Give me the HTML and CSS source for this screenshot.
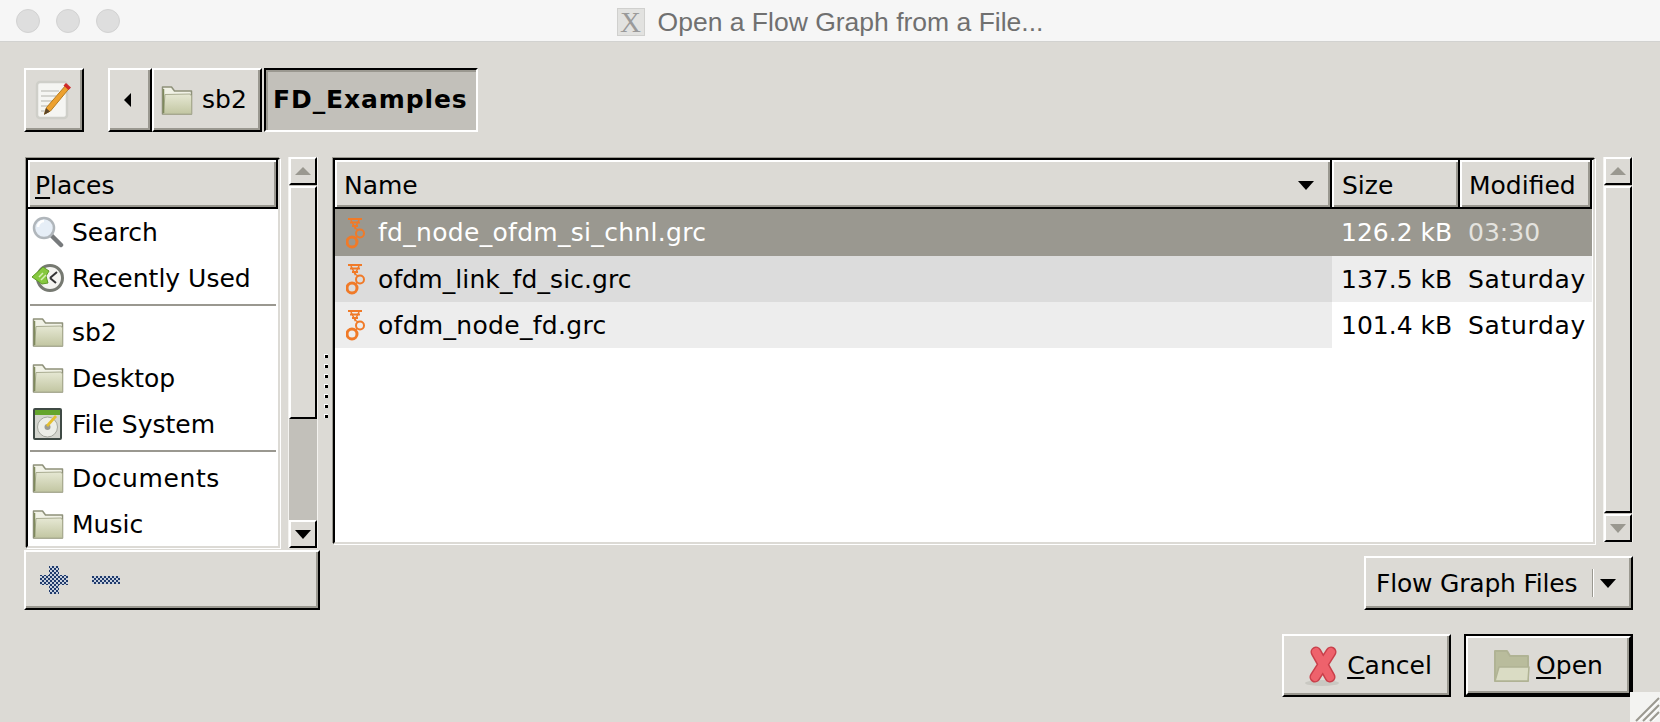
FILE: index.html
```html
<!DOCTYPE HTML>
<html lang="en">
  <head>
    <title>Open a Flow Graph from a File...</title>
    <meta charset="utf-8">
    <link rel="stylesheet" href="styles.css">
  </head>
  <body>

  <svg class="defs" width="0" height="0">
    <defs>
      <linearGradient id="folderFill" x1="0" y1="0" x2="0" y2="1">
        <stop offset="0" stop-color="#e6e8d4"/>
        <stop offset="1" stop-color="#c2c6a2"/>
      </linearGradient>
      <pattern id="dither" width="4" height="4" patternUnits="userSpaceOnUse">
        <rect width="4" height="4" fill="#c9d0dc"/>
        <rect width="2" height="2" fill="#1f3a6b"/>
        <rect x="2" y="2" width="2" height="2" fill="#1f3a6b"/>
      </pattern>
      <symbol id="folder" viewBox="0 0 32 32">
        <path d="M1.500 3h9l3 4h17v23h-29z" fill="#f1f2e6" stroke="#8e917a" stroke-width="1.500" stroke-linejoin="round"/>
        <path d="M4 10.500l25-.5 1.500 2v18h-28z" fill="url(#folderFill)" stroke="#a9ac90" stroke-linejoin="round"/>
        <path d="M2.500 5v24" stroke="#7f8a5c" stroke-width="1.500"/>
      </symbol>
      <symbol id="grc" viewBox="0 0 20 32">
        <g fill="none" stroke="#f07a28">
          <path d="M2 2h14M4 5.500h10M6 9h6" stroke-width="2"/>
          <path d="M5 3l4 8 4-8" stroke-width="1.500"/>
          <circle cx="14" cy="16.500" r="4" stroke-width="2"/>
          <circle cx="6" cy="25" r="5" stroke-width="3"/>
          <path d="M9 11l3 2M11 19.500l-2 2" stroke-width="1.500"/>
        </g>
      </symbol>
    </defs>
  </svg>

  <div class="titlebar">
    <div class="lights"><span></span><span></span><span></span></div>
    <div class="title"><span class="x-icon">X</span>Open a Flow Graph from a File...</div>
  </div>

  <div class="dialog">

    <div class="toolbar">
      <div class="btn edit-btn">
        <svg width="38" height="42" viewBox="0 0 38 42">
          <rect x="2" y="3" width="30" height="36" rx="3" fill="#f5f5f2" stroke="#cfcfc9" stroke-width="2.500"/>
          <path d="M6 12h18M6 17h15M6 22h12M6 27h9M6 32h6" stroke="#c9c9c4" stroke-width="1.500"/>
          <path d="M31 6l3.500 3-19 23-6 3 2-6.500z" fill="#eda12f" stroke="#b47c22"/>
          <path d="M31 4l5 4.500-2.500 2.500-5-4.500z" fill="#cf2a2a"/>
          <path d="M9 36l2-7 4 3.500z" fill="#5a4428"/>
        </svg>
      </div>
      <div class="crumbs">
        <div class="btn back-btn"><span class="arrow-left"></span></div>
        <div class="btn crumb"><svg class="ico" width="32" height="32"><use href="#folder"/></svg>sb2</div>
        <div class="crumb-on">FD_Examples</div>
      </div>
    </div>

    <div class="panes">
      <div class="left">
        <div class="places-row">
          <div class="frame places">
            <div class="head places-head"><u>P</u>laces</div>
            <div class="place"><svg class="ico" width="32" height="32" viewBox="0 0 32 32">
              <path d="M20 20l9 9" stroke="#777a7c" stroke-width="4.500" stroke-linecap="round"/>
              <circle cx="12" cy="12" r="10" fill="#e6eef7" stroke="#b0b6bb" stroke-width="2.500"/>
              <path d="M6 11a6 6 0 0 1 6-6" stroke="#fff" stroke-width="2.500" fill="none"/>
            </svg>Search</div>
            <div class="place"><svg class="ico" width="32" height="32" viewBox="0 0 32 32">
              <circle cx="18" cy="16" r="12.500" fill="#f4f4f0" stroke="#767971" stroke-width="3"/>
              <path d="M18 16l7-6M18 16l6 5" stroke="#333" stroke-width="2" fill="none"/>
              <path d="M0 15l11-10 6 4-3 5 2 7-6 1z" fill="#86c83e" stroke="#5f9c26"/>
              <path d="M7 15l4-4M9 18l5-5" stroke="#d9f0b8" stroke-width="1.500"/>
            </svg>Recently Used</div>
            <div class="sep"></div>
            <div class="place"><svg class="ico" width="32" height="32"><use href="#folder"/></svg>sb2</div>
            <div class="place"><svg class="ico" width="32" height="32"><use href="#folder"/></svg>Desktop</div>
            <div class="place"><svg class="ico" width="32" height="32" viewBox="0 0 32 32">
              <rect x="2" y="1" width="27" height="30" rx="1" fill="#d4d6cf" stroke="#3f4a45" stroke-width="2"/>
              <rect x="3" y="2" width="25" height="5" fill="#64a52c"/>
              <circle cx="15.500" cy="19" r="10" fill="#eceee8" stroke="#a5a89f"/>
              <circle cx="15.500" cy="19" r="3" fill="#9a9c94"/>
              <path d="M14 17l9-10 2 2-9 10z" fill="#e5c02f"/>
            </svg>File System</div>
            <div class="sep"></div>
            <div class="place wide"><svg class="ico" width="32" height="32"><use href="#folder"/></svg>Documents</div>
            <div class="place"><svg class="ico" width="32" height="32"><use href="#folder"/></svg>Music</div>
          </div>
          <div class="sb places-sb">
            <div class="sb-btn"><span class="tri tri-up off"></span></div>
            <div class="sb-thumb"></div>
            <div class="sb-rest"></div>
            <div class="sb-btn"><span class="tri tri-down"></span></div>
          </div>
        </div>
        <div class="btn add-bar">
          <svg width="28" height="28" viewBox="0 0 28 28"><path d="M9 0h10v9h9v10h-9v9h-10v-9h-9v-10h9z" fill="url(#dither)"/></svg>
          <svg width="28" height="8" viewBox="0 0 28 8"><rect width="28" height="8" fill="url(#dither)"/></svg>
        </div>
      </div>

      <div class="gutter"><i></i><i></i><i></i><i></i><i></i><i></i><i></i></div>

      <div class="right">
        <div class="files-row">
          <div class="frame files">
            <div class="file-grid">
              <div class="head name-head">Name<span class="tri tri-down"></span></div>
              <div class="head">Size</div>
              <div class="head mod-head">Modified</div>

              <div class="cell name sel"><svg class="grc" width="20" height="32"><use href="#grc"/></svg>fd_node_ofdm_si_chnl.grc</div>
              <div class="cell sel">126.2 kB</div>
              <div class="cell mod sel dim">03:30</div>

              <div class="cell name tight shade-2"><svg class="grc" width="20" height="32"><use href="#grc"/></svg>ofdm_link_fd_sic.grc</div>
              <div class="cell shade-1">137.5 kB</div>
              <div class="cell mod day shade-1">Saturday</div>

              <div class="cell name shade-1"><svg class="grc" width="20" height="32"><use href="#grc"/></svg>ofdm_node_fd.grc</div>
              <div class="cell">101.4 kB</div>
              <div class="cell mod day">Saturday</div>
            </div>
          </div>
          <div class="sb files-sb">
            <div class="sb-btn"><span class="tri tri-up off"></span></div>
            <div class="sb-thumb"></div>
            <div class="sb-btn"><span class="tri tri-down off"></span></div>
          </div>
        </div>
        <div class="filter-row">
          <div class="btn combo">Flow Graph Files<span class="combo-sep"></span><span class="tri tri-down"></span></div>
        </div>
      </div>
    </div>

    <div class="actions">
      <div class="btn action">
        <svg class="x-mark" width="36" height="42" viewBox="0 0 36 42">
          <ellipse cx="17" cy="38" rx="17" ry="3" fill="#c9c8c2"/>
          <path d="M11 7l14 25M26 7l-16 25" stroke="#c93f4a" stroke-width="11" stroke-linecap="round"/>
          <path d="M11 7l14 25M26 7l-16 25" stroke="#ee626c" stroke-width="8" stroke-linecap="round"/>
        </svg>
        <span><u>C</u>ancel</span>
      </div>
      <div class="default-ring">
        <div class="btn action">
          <svg width="36" height="32" viewBox="0 0 36 32">
            <path d="M1 1h12l3 5h18v25h-33z" fill="#b9bc9c" stroke="#b0b394" stroke-width="2" stroke-linejoin="round"/>
            <path d="M5 17h30l-1 14h-33z" fill="#dadcc4" stroke="#b0b394" stroke-width="1.500" stroke-linejoin="round"/>
          </svg>
          <span><u>O</u>pen</span>
        </div>
      </div>
    </div>
  </div>

  <div class="grip">
    <svg width="30" height="30" viewBox="0 0 30 30">
      <path d="M29 6l-23 23M29 13l-16 16M29 20l-9 9" stroke="#9a9890" stroke-width="2"/>
      <path d="M29 9l-20 20M29 16l-13 13M29 23l-6 6" stroke="#fff" stroke-width="1"/>
    </svg>
  </div>

  </body>
</html>
```

FILE: styles.css
```css
html {
  height: 100%;
}
body {
  margin: 0;
  height: 722px;
  overflow: hidden;
  background: #dcdad5;
  color: #000;
  font-family: "DejaVu Sans", sans-serif;
  font-size: 25px;
  display: flex;
  flex-direction: column;
}

.defs {
  display: block;
  height: 0;
}

u {
  text-decoration-thickness: 2px;
  text-underline-offset: 3px;
}

/* title bar */
.titlebar {
  height: 42px;
  box-sizing: border-box;
  flex: none;
  display: grid;
  grid-template-columns: 1fr auto 1fr;
  align-items: center;
  background: #f6f6f6;
  border-bottom: 1px solid #d2d2d0;
}
.lights {
  display: flex;
  gap: 16px;
  padding-left: 16px;
}
.lights span {
  width: 22px;
  height: 22px;
  border-radius: 50%;
  background: #dedede;
  border: 1px solid #d2d2d2;
}
.title {
  display: flex;
  align-items: center;
  gap: 13px;
  padding-top: 3px;
  font-family: "Liberation Sans", sans-serif;
  font-size: 26.500px;
  color: #707070;
}
.x-icon {
  width: 28px;
  height: 28px;
  background: #e2e2e0;
  border: 1px solid #d0d0ce;
  box-sizing: border-box;
  font: 29px/26px "Liberation Serif", serif;
  color: #9a9a9a;
  text-align: center;
}

/* dialog */
.dialog {
  flex: 1;
  padding: 26px 27px 0 24px;
}

.btn {
  box-sizing: border-box;
  border: 2px solid;
  border-color: #fff #000 #000 #fff;
  box-shadow: inset -2px -2px 0 #9a9890;
  background: #dcdad5;
  display: flex;
  align-items: center;
}

.toolbar {
  display: flex;
  gap: 24px;
  height: 64px;
}
.edit-btn {
  width: 60px;
  justify-content: center;
}
.crumbs {
  display: flex;
}
.back-btn {
  width: 44px;
  justify-content: center;
  padding-right: 5px;
}
.arrow-left {
  width: 0;
  height: 0;
  border: 7px solid transparent;
  border-left: 0;
  border-right: 7px solid #000;
}
.crumb {
  width: 110px;
  gap: 9px;
  padding: 0 0 2px 7px;
}
.crumb .ico {
  margin-top: 2px;
}
.crumb-on {
  box-sizing: border-box;
  margin-left: 2px;
  width: 214px;
  border: 2px solid;
  border-color: #000 #fff #fff #000;
  box-shadow: inset 2px 2px 0 #9a9890;
  background: #c2c0ba;
  font-weight: bold;
  letter-spacing: 0.900px;
  display: flex;
  align-items: center;
  padding: 0 0 2px 7px;
}

.panes {
  display: flex;
  margin-top: 25px;
}
.left {
  width: 296px;
  flex: none;
}
.places-row {
  display: flex;
  gap: 8px;
  height: 391px;
  padding: 1px 2px 0 2px;
  box-sizing: border-box;
}
.frame {
  box-sizing: border-box;
  border: 2px solid;
  border-color: #000 #dcdad5 #dcdad5 #000;
  box-shadow: -1px -1px 0 #9a9890, 1px 1px 0 #fff;
  background: #fff;
  overflow: hidden;
}
.places {
  width: 254px;
  flex: none;
}
.head {
  box-sizing: border-box;
  height: 49px;
  background: #dcdad5;
  border: solid #000;
  border-width: 0 2px 2px 0;
  box-shadow: inset 2px 2px 0 #fff, inset -2px -2px 0 #9a9890;
  display: flex;
  align-items: center;
  padding: 3px 0 0 10px;
}
.places-head {
  padding-left: 7px;
}
.place {
  height: 46px;
  display: flex;
  align-items: center;
  gap: 8px;
  padding-left: 4px;
}
.wide {
  letter-spacing: 0.600px;
}
.sep {
  height: 2px;
  margin: 3px 2px 3px 2px;
  background: #9a9890;
}

/* scrollbars */
.sb {
  box-sizing: border-box;
  width: 30px;
  flex: none;
  display: flex;
  flex-direction: column;
  margin-top: -1px;
  background: #c2c0ba;
  border: solid #f4f3f0;
  border-width: 0 1px;
}
.sb-btn {
  height: 28px;
  flex: none;
  box-sizing: border-box;
  background: #dcdad5;
  border: 2px solid;
  border-color: #fff #000 #000 #fff;
  display: flex;
  align-items: center;
  justify-content: center;
}
.sb-thumb {
  height: 233px;
  flex: none;
  margin-top: 1px;
  box-sizing: border-box;
  background: #dcdad5;
  border: 2px solid;
  border-color: #fff #000 #000 #fff;
}
.sb-rest {
  flex: 1;
}
.files-sb {
  margin-bottom: 2px;
}
.files-sb .sb-thumb {
  height: auto;
  flex: 1;
  margin: 1px 0;
}

.tri {
  width: 0;
  height: 0;
  border-left: 8px solid transparent;
  border-right: 8px solid transparent;
}
.tri-up {
  border-bottom: 8px solid #000;
}
.tri-down {
  border-top: 9px solid #000;
}
.tri-up.off {
  border-bottom-color: #9a9890;
}
.tri-down.off {
  border-top-color: #9a9890;
}

.add-bar {
  height: 60px;
  margin-top: 2px;
  gap: 24px;
  padding-left: 14px;
}

.gutter {
  width: 13px;
  flex: none;
  display: flex;
  flex-direction: column;
  align-items: center;
  gap: 6px;
  padding: 197px 2px 0 0;
  box-sizing: border-box;
}
.gutter i {
  width: 3px;
  height: 3px;
  background: #000;
  border: solid #fff;
  border-width: 1px 0 0 1px;
}

/* file list */
.right {
  flex: 1;
  min-width: 0;
}
.files-row {
  display: flex;
  gap: 8px;
  height: 387px;
  padding-top: 1px;
  box-sizing: border-box;
}
.files {
  flex: 1;
  min-width: 0;
}
.file-grid {
  display: grid;
  grid-template-columns: 997px 128px 132px;
  grid-template-rows: 49px 47px 46px 46px;
}
.name-head {
  justify-content: space-between;
  padding-left: 9px;
  padding-right: 16px;
}
.mod-head {
  padding-left: 9px;
}
.cell {
  display: flex;
  align-items: center;
  padding-left: 9px;
  white-space: nowrap;
  overflow: hidden;
}
.cell.mod {
  padding-left: 8px;
}
.day {
  letter-spacing: 0.650px;
}
.cell.name {
  padding-left: 11px;
  gap: 12px;
  letter-spacing: 0.300px;
}
.cell.tight {
  letter-spacing: 0.100px;
}
.grc {
  flex: none;
}
.sel {
  background: #9a9890;
  color: #fff;
}
.dim {
  color: #e4e3df;
}
.shade-1 {
  background: #ededed;
}
.shade-2 {
  background: #dcdcdc;
}

.filter-row {
  display: flex;
  justify-content: flex-end;
  margin-top: 12px;
}
.combo {
  width: 269px;
  height: 54px;
  padding-left: 10px;
  letter-spacing: -0.200px;
}
.combo-sep {
  width: 1px;
  height: 28px;
  margin: 0 6px 0 15px;
  background: #9a9890;
  border-right: 1px solid #fff;
}

/* bottom buttons */
.actions {
  display: flex;
  justify-content: flex-end;
  gap: 13px;
  margin-top: 24px;
}
.action {
  width: 169px;
  height: 63px;
  justify-content: center;
  gap: 6px;
}
.x-mark {
  margin-left: 4px;
}
.default-ring {
  border: 2px solid #000;
  display: flex;
}
.default-ring .action {
  width: 165px;
  height: 59px;
}

.grip {
  position: absolute;
  right: 0;
  bottom: 0;
  width: 30px;
  height: 30px;
  background: #f3f3f1;
}
```
